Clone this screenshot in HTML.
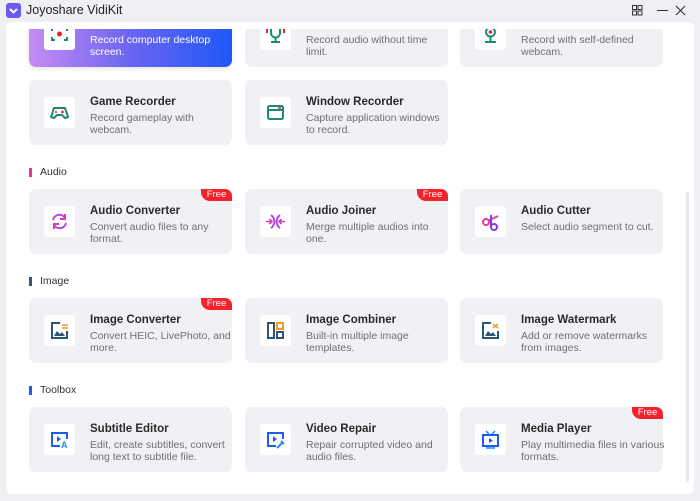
<!DOCTYPE html>
<html><head><meta charset="utf-8"><style>
*{margin:0;padding:0;box-sizing:border-box}
body{width:700px;height:501px;background:#eff0f4;font-family:"Liberation Sans",sans-serif;position:relative;overflow:hidden}
.title{position:absolute;left:26px;top:3px;font-size:12.5px;color:#222}
.logo{position:absolute;left:6px;top:3px;width:15px;height:15px;border-radius:3px;background:#6b5cf0}
.panel{position:absolute;left:6px;top:22px;width:688px;height:472px;background:#fff;border-radius:6px}
.clip{position:absolute;left:6px;top:29px;width:676px;height:462px;overflow:hidden}
.card{position:absolute;width:203px;height:65px;background:#f0f1f5;border-radius:7px}
.ic{position:absolute;left:15px;top:17px;width:31px;height:31px;background:#fff;border-radius:3px}
.ic svg{position:absolute;left:6px;top:6px}
.t{position:absolute;left:61px;top:16px;font-size:11.5px;font-weight:bold;color:#2a2a2a}
.d{position:absolute;left:61px;top:33px;font-size:10.5px;line-height:11.5px;color:#6f6f6f;width:134px}
.free{position:absolute;right:0;top:0;width:31px;height:12px;background:#f5222d;color:#fff;font-size:9.5px;line-height:12px;text-align:center;border-radius:0 7px 0 9px}
.sec{position:absolute;left:24px;font-size:10.5px;color:#333}
.sec i{position:absolute;left:-1px;top:2px;width:3px;height:9px}
.sec span{margin-left:10px}
</style></head><body>
<div class="logo"><svg width="15" height="15"><path d="M4 6l3.5 3.5L11 6" stroke="#fff" stroke-width="2" fill="none"/></svg></div>
<div class="title">Joyoshare VidiKit</div>
<svg style="position:absolute;left:631px;top:4px" width="12" height="12"><g fill="none" stroke="#333" stroke-width="1"><rect x="1.5" y="1.5" width="4" height="4"/><rect x="7" y="1.5" width="4" height="4"/><rect x="1.5" y="7" width="4" height="4"/><rect x="7" y="7" width="4" height="4"/></g></svg>
<div style="position:absolute;left:657px;top:10px;width:11px;height:1px;background:#333"></div>
<svg style="position:absolute;left:675px;top:5px" width="11" height="11"><path d="M1 1L10 10M10 1L1 10" stroke="#333" stroke-width="1.1"/></svg>
<div class="panel"></div>
<div style="position:absolute;left:686px;top:192px;width:3px;height:290px;background:#e6e7eb;border-radius:2px"></div>
<div class="clip">
<div class="card" style="left:23px;top:-27px;background:linear-gradient(90deg,#c58cf5,#6a65f0 50%,#1f58f8);box-shadow:0 2px 4px rgba(0,0,0,.1)"><div class="ic"><svg width="19" height="19"><circle cx="9.5" cy="9" r="2.5" fill="#e52525"/><path d="M2 6V3M17 6V3M2 12v3h3M17 12v3h-3" stroke="#1f8a74" stroke-width="2" fill="none"/></svg></div><div class="d" style="color:#fff">Record computer desktop screen.</div></div>
<div class="card" style="left:239px;top:-27px"><div class="ic"><svg width="19" height="19"><path d="M5 4v4a4.5 4.5 0 009 0V4M9.5 12.5V17M5 17h9" stroke="#1f8a74" stroke-width="2" fill="none"/><path d="M1 4v4M18 4v4" stroke="#e52525" stroke-width="2"/></svg></div><div class="d">Record audio without time limit.</div></div>
<div class="card" style="left:454px;top:-27px"><div class="ic"><svg width="19" height="19"><circle cx="9.5" cy="7" r="4.5" stroke="#1f8a74" stroke-width="2" fill="none"/><circle cx="9.5" cy="7" r="1.8" fill="#e52525"/><path d="M4 17h11M9.5 12v5" stroke="#1f8a74" stroke-width="2"/></svg></div><div class="d">Record with self-defined webcam.</div></div>

<div class="card" style="left:23px;top:51px"><div class="ic"><svg width="19" height="19"><path d="M4 5h11l3 9-3 1-3-3H7l-3 3-3-1z" stroke="#1f8a74" stroke-width="2" fill="none" stroke-linejoin="round"/><circle cx="6" cy="9" r="1" fill="#e52525"/><path d="M11 9h3M12.5 7.5v3" stroke="#e52525" stroke-width="1.2"/></svg></div><div class="t">Game Recorder</div><div class="d">Record gameplay with webcam.</div></div>
<div class="card" style="left:239px;top:51px"><div class="ic"><svg width="19" height="19"><rect x="2" y="3" width="15" height="13" rx="1.5" stroke="#1f8a74" stroke-width="2" fill="none"/><path d="M2 7h15" stroke="#1f8a74" stroke-width="2"/><path d="M12 5h3" stroke="#e52525" stroke-width="1.5"/></svg></div><div class="t">Window Recorder</div><div class="d">Capture application windows to record.</div></div>

<div class="sec" style="top:137px"><i style="background:#e8358f"></i><span>Audio</span></div>
<div class="card" style="left:23px;top:160px"><div class="free">Free</div><div class="ic"><svg width="19" height="19"><path d="M3 8a6.5 6.5 0 0112-2M16 11a6.5 6.5 0 01-12 2" stroke="#b445e8" stroke-width="2" fill="none"/><path d="M15 2v5h-5M4 17v-5h5" stroke="#d93cb0" stroke-width="2" fill="none"/></svg></div><div class="t">Audio Converter</div><div class="d">Convert audio files to any format.</div></div>
<div class="card" style="left:239px;top:160px"><div class="free">Free</div><div class="ic"><svg width="19" height="19"><path d="M5 3a8 8 0 010 13M14 3a8 8 0 000 13" stroke="#b445e8" stroke-width="2" fill="none"/><path d="M0 9.5h6M3.5 7l2.5 2.5L3.5 12M19 9.5h-6M15.5 7L13 9.5l2.5 2.5" stroke="#d93cb0" stroke-width="1.6" fill="none"/></svg></div><div class="t">Audio Joiner</div><div class="d">Merge multiple audios into one.</div></div>
<div class="card" style="left:454px;top:160px"><div class="ic"><svg width="19" height="19"><circle cx="5" cy="10" r="3" stroke="#e63b9e" stroke-width="2" fill="none"/><path d="M7 9l10-5" stroke="#e63b9e" stroke-width="2"/><path d="M10 3v12a3 3 0 106 0 3 3 0 00-6 0" stroke="#8a3be8" stroke-width="2" fill="none"/></svg></div><div class="t">Audio Cutter</div><div class="d" style="width:145px">Select audio segment to cut.</div></div>

<div class="sec" style="top:246px"><i style="background:#2e5a78"></i><span>Image</span></div>
<div class="card" style="left:23px;top:269px"><div class="free">Free</div><div class="ic"><svg width="19" height="19"><path d="M10 2H2v15h15V10" stroke="#2d5675" stroke-width="2" fill="none"/><path d="M4 15l3-5 3 3 2-2 3 4z" fill="#2d5675"/><path d="M12 4h6M12 7h6" stroke="#f39a1c" stroke-width="1.5"/></svg></div><div class="t">Image Converter</div><div class="d" style="width:145px">Convert HEIC, LivePhoto, and more.</div></div>
<div class="card" style="left:239px;top:269px"><div class="ic"><svg width="19" height="19"><rect x="2" y="2" width="6" height="15" stroke="#2d5675" stroke-width="2" fill="none"/><rect x="11" y="2" width="6" height="6" stroke="#f39a1c" stroke-width="2" fill="none"/><rect x="11" y="11" width="6" height="6" stroke="#2d5675" stroke-width="2" fill="none"/></svg></div><div class="t">Image Combiner</div><div class="d">Built-in multiple image templates.</div></div>
<div class="card" style="left:454px;top:269px"><div class="ic"><svg width="19" height="19"><path d="M10 2H2v15h15V10" stroke="#2d5675" stroke-width="2" fill="none"/><path d="M4 15l3-5 3 3 2-2 3 4z" fill="#2d5675"/><path d="M12 3l5 4M17 3l-5 4" stroke="#f39a1c" stroke-width="1.5"/></svg></div><div class="t">Image Watermark</div><div class="d" style="width:145px">Add or remove watermarks from images.</div></div>

<div class="sec" style="top:355px"><i style="background:#1a5cf5"></i><span>Toolbox</span></div>
<div class="card" style="left:23px;top:378px"><div class="ic"><svg width="19" height="19"><path d="M10 16H2V3h15v6" stroke="#1a5cf5" stroke-width="2" fill="none"/><path d="M7 6v6l4-3z" fill="#1a5cf5"/><text x="11" y="18" font-size="9" font-weight="bold" fill="#1a8cf5" font-family="Liberation Sans">A</text></svg></div><div class="t">Subtitle Editor</div><div class="d" style="width:142px">Edit, create subtitles, convert long text to subtitle file.</div></div>
<div class="card" style="left:239px;top:378px"><div class="ic"><svg width="19" height="19"><path d="M10 16H2V3h15v6" stroke="#1a5cf5" stroke-width="2" fill="none"/><path d="M7 6v6l4-3z" fill="#1a5cf5"/><path d="M11 18l5-5M15 11l3 3" stroke="#1a8cf5" stroke-width="2"/></svg></div><div class="t">Video Repair</div><div class="d">Repair corrupted video and audio files.</div></div>
<div class="card" style="left:454px;top:378px"><div class="free">Free</div><div class="ic"><svg width="19" height="19"><rect x="2" y="5" width="15" height="11" stroke="#1a5cf5" stroke-width="2" fill="none"/><path d="M5 1l3 3M14 1l-3 3M5 18h9" stroke="#1a8cf5" stroke-width="1.5"/><path d="M8 8v5l4-2.5z" fill="#1a5cf5"/></svg></div><div class="t">Media Player</div><div class="d" style="width:145px">Play multimedia files in various formats.</div></div>
</div>
</body></html>
